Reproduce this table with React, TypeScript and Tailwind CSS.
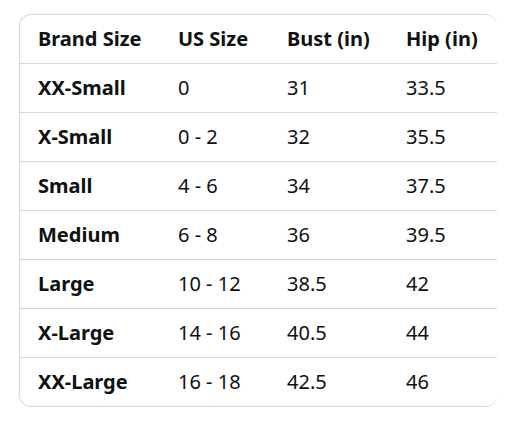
import React from "react";

const rows = [
  ["XX-Small", "0", "31", "33.5"],
  ["X-Small", "0 - 2", "32", "35.5"],
  ["Small", "4 - 6", "34", "37.5"],
  ["Medium", "6 - 8", "36", "39.5"],
  ["Large", "10 - 12", "38.5", "42"],
  ["X-Large", "14 - 16", "40.5", "44"],
  ["XX-Large", "16 - 18", "42.5", "46"],
];

export default function App() {
  return (
    <div className="w-[507px] h-[430px] bg-white pt-[14px] pl-[19px]" style={{ fontFamily: '"Noto Sans", sans-serif' }}>
      <div className="w-[478px] border border-r-0 border-[#d5d9d9] rounded-[12px] overflow-hidden">
        <table className="border-collapse text-[20px] text-[#0f1111] table-fixed w-[477px]">
          <colgroup>
            <col className="w-[140px]" />
            <col className="w-[109px]" />
            <col className="w-[119px]" />
            <col className="w-[109px]" />
          </colgroup>
          <thead>
            <tr className="h-[48px]">
              {["Brand Size", "US Size", "Bust (in)", "Hip (in)"].map((h) => (
                <th key={h} className="text-left font-bold px-[18px] p-0 whitespace-nowrap">{h}</th>
              ))}
            </tr>
          </thead>
          <tbody>
            {rows.map((r) => (
              <tr key={r[0]} className="h-[49px] border-t border-[#d5d9d9]">
                {r.map((c, i) => (
                  <td key={i} className={`px-[18px] p-0 whitespace-nowrap ${i === 0 ? "font-bold" : "font-normal"}`}>{c}</td>
                ))}
              </tr>
            ))}
          </tbody>
        </table>
      </div>
    </div>
  );
}
